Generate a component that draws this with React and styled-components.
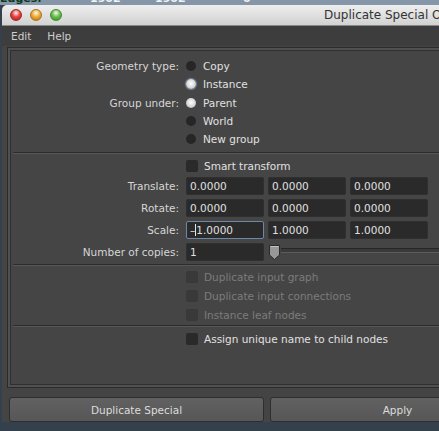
import React from "react";
import styled, { createGlobalStyle } from "styled-components";

const Global = createGlobalStyle`
  html, body {
    margin: 0;
    padding: 0;
    background: #3b4651;
  }
  body {
    font-family: "DejaVu Sans", "Liberation Sans", sans-serif;
  }
`;

const Page = styled.div`
  width: 439px;
  height: 431px;
  overflow: hidden;
  background: #34404b;
`;

const BackStrip = styled.div`
  height: 5px;
  overflow: hidden;
  background: #8496a8;
  display: flex;
  font-size: 11px;
  font-weight: bold;
  line-height: 13px;
  color: #f2f2f2;
  span {
    display: block;
    margin-top: -8px;
  }
  .first {
    width: 90px;
    color: #0d3b1e;
  }
  .cell {
    width: 65px;
  }
`;

const Window = styled.div`
  width: 531px;
  margin-left: 2px;
  background: #444444;
  border-top-left-radius: 5px;
  overflow: hidden;
`;

const TitleBar = styled.div`
  height: 21px;
  display: flex;
  align-items: center;
  background: linear-gradient(#eeeeee, #d2d2d2);
  border-bottom: 1px solid #8a8a8a;
  box-sizing: border-box;
`;

const Lights = styled.div`
  display: flex;
  gap: 8px;
  padding-left: 8px;
`;

const Light = styled.span`
  width: 12px;
  height: 12px;
  border-radius: 50%;
  box-sizing: border-box;
  border: 1px solid ${(p) => p.$edge};
  background: radial-gradient(circle at 50% 30%, #ffffffcc 0, ${(p) => p.$color} 45%, ${(p) => p.$dark} 100%);
`;

const Title = styled.div`
  margin-left: 262px;
  font-size: 12px;
  color: #333333;
  white-space: nowrap;
`;

const MenuBar = styled.div`
  height: 20px;
  display: flex;
  align-items: center;
  gap: 16px;
  padding-left: 9px;
  background: #3d3d3d;
  font-size: 10.5px;
  color: #cdcdcd;
`;

const Frame = styled.div`
  margin: 1px 0 0 5px;
  border: 1px solid #2b2b2b;
  padding: 2px;
  background: #505050;
`;

const Inner = styled.div`
  height: 335px;
  border: 1px solid #2f2f2f;
  border-right: none;
  background: #454545;
  padding-top: 6px;
  box-sizing: border-box;
`;

const Section = styled.div`
  display: flex;
  flex-direction: column;
  gap: ${(p) => p.$gap || 0}px;
`;

const Row = styled.div`
  display: grid;
  grid-template-columns: 168px auto;
  column-gap: 7px;
  align-items: center;
  height: 18px;
  margin-top: ${(p) => p.$top || 0}px;
`;

const Label = styled.div`
  text-align: right;
  font-size: 10.5px;
  color: #d6d6d6;
  white-space: nowrap;
`;

const Option = styled.label`
  display: flex;
  align-items: center;
  font-size: 10.5px;
  color: ${(p) => (p.$disabled ? "#7c7c7c" : "#e0e0e0")};
  white-space: nowrap;
`;

const Radio = styled.span`
  width: 10px;
  height: 10px;
  border-radius: 50%;
  margin-right: 7px;
  background: ${(p) => (p.$on ? "radial-gradient(circle at 50% 45%, #ffffff 0, #d6d6d6 55%, #9a9a9a 100%)" : "#262626")};
  box-shadow: ${(p) => (p.$focus ? "0 0 1px 1px #6f86a2" : "none")};
`;

const Check = styled.span`
  width: 12px;
  height: 12px;
  border-radius: 2px;
  margin-right: 6px;
  background: ${(p) => (p.$disabled ? "#393939" : "#2a2a2a")};
`;

const Fields = styled.div`
  display: flex;
  gap: 4px;
  align-items: center;
`;

const Field = styled.div`
  width: 78px;
  height: 18px;
  box-sizing: border-box;
  border-radius: 2px;
  border: 1px solid ${(p) => (p.$focus ? "#6d87a6" : "#2f2f2f")};
  background: #2a2a2a;
  color: #e0e0e0;
  font-size: 10.5px;
  line-height: 16px;
  padding-left: 3px;
  display: flex;
  align-items: center;
`;

const Caret = styled.span`
  width: 1px;
  height: 12px;
  background: #e6e6e6;
`;

const Slider = styled.div`
  display: flex;
  align-items: center;
  flex: 1;
`;

const Track = styled.div`
  width: 200px;
  height: 3px;
  margin-top: -4px;
  border-top: 1px solid #262626;
  border-bottom: 1px solid #5c5c5c;
  background: #3a3a3a;
`;

const Separator = styled.div`
  margin: ${(p) => p.$m || "4px 0"};
  margin-left: 2px;
  height: 1px;
  background: #2c2c2c;
  border-bottom: 1px solid #575757;
`;

const Buttons = styled.div`
  display: flex;
  gap: 6px;
  padding: 9px 0 0 7px;
`;

const Button = styled.button`
  width: 255px;
  height: 25px;
  border-radius: 3px;
  border: 1px solid #2e2e2e;
  background: linear-gradient(#616161, #575757);
  color: #dcdcdc;
  font-family: "DejaVu Sans", "Liberation Sans", sans-serif;
  font-size: 10.5px;
  padding: 0;
`;

function Handle() {
  return (
    <svg width="13" height="17" viewBox="0 0 13 17">
      <path d="M1.5 1.5 H11.5 V11 L6.5 15.5 L1.5 11 Z" fill="#979797" stroke="#2a2a2a" strokeWidth="1" />
      <path d="M2.5 2.5 H10.5" stroke="#c4c4c4" strokeWidth="1" />
    </svg>
  );
}

export default function App() {
  return (
    <Page>
      <Global />
      <BackStrip>
        <span className="first">Edges:</span>
        <span className="cell">1902</span>
        <span className="cell" style={{ width: 88 }}>1902</span>
        <span>0</span>
      </BackStrip>
      <Window>
        <TitleBar>
          <Lights>
            <Light $color="#e8453f" $dark="#a51e1a" $edge="#9c2a26" />
            <Light $color="#f0ad33" $dark="#b5700c" $edge="#a3731f" />
            <Light $color="#6cc04f" $dark="#2f8a23" $edge="#3f8a2c" />
          </Lights>
          <Title>Duplicate Special Options</Title>
        </TitleBar>
        <MenuBar>
          <span>Edit</span>
          <span>Help</span>
        </MenuBar>
        <Frame>
          <Inner>
            <Section>
              <Row>
                <Label>Geometry type:</Label>
                <Option><Radio />Copy</Option>
              </Row>
              <Row>
                <Label />
                <Option><Radio $on $focus />Instance</Option>
              </Row>
              <Row $top={1}>
                <Label>Group under:</Label>
                <Option><Radio $on />Parent</Option>
              </Row>
              <Row>
                <Label />
                <Option><Radio />World</Option>
              </Row>
              <Row>
                <Label />
                <Option><Radio />New group</Option>
              </Row>
            </Section>
            <Separator $m="4px 0 3px" />
            <Section $gap={4}>
              <Row style={{ marginBottom: -2 }}>
                <Label />
                <Option><Check />Smart transform</Option>
              </Row>
              <Row>
                <Label>Translate:</Label>
                <Fields>
                  <Field>0.0000</Field>
                  <Field>0.0000</Field>
                  <Field>0.0000</Field>
                </Fields>
              </Row>
              <Row>
                <Label>Rotate:</Label>
                <Fields>
                  <Field>0.0000</Field>
                  <Field>0.0000</Field>
                  <Field>0.0000</Field>
                </Fields>
              </Row>
              <Row>
                <Label>Scale:</Label>
                <Fields>
                  <Field $focus>–<Caret />1.0000</Field>
                  <Field>1.0000</Field>
                  <Field>1.0000</Field>
                </Fields>
              </Row>
              <Row>
                <Label>Number of copies:</Label>
                <Fields>
                  <Field>1</Field>
                  <Slider>
                    <Handle />
                    <Track />
                  </Slider>
                </Fields>
              </Row>
            </Section>
            <Separator $m="3px 0 2px" />
            <Section $gap={1}>
              <Row>
                <Label />
                <Option $disabled><Check $disabled />Duplicate input graph</Option>
              </Row>
              <Row>
                <Label />
                <Option $disabled><Check $disabled />Duplicate input connections</Option>
              </Row>
              <Row>
                <Label />
                <Option $disabled><Check $disabled />Instance leaf nodes</Option>
              </Row>
            </Section>
            <Separator $m="1px 0 3px" />
            <Section>
              <Row>
                <Label />
                <Option><Check />Assign unique name to child nodes</Option>
              </Row>
            </Section>
          </Inner>
        </Frame>
        <Buttons>
          <Button>Duplicate Special</Button>
          <Button>Apply</Button>
        </Buttons>
      </Window>
    </Page>
  );
}
